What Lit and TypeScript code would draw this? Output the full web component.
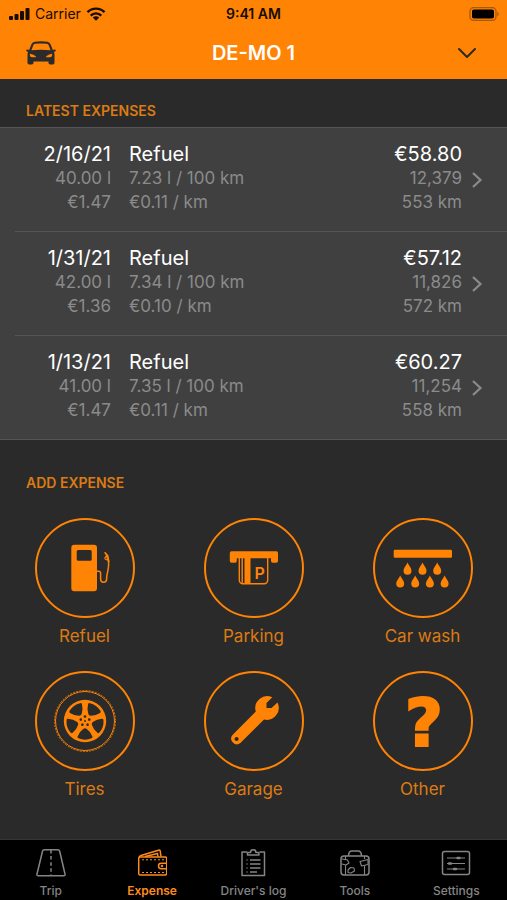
import { LitElement, html, css, svg } from "lit";
import { customElement, state } from "lit/decorators.js";

interface Expense {
  date: string;
  title: string;
  cost: string;
  volume: string;
  consumption: string;
  odometer: string;
  unitPrice: string;
  costPerKm: string;
  distance: string;
}

const EXPENSES: Expense[] = [
  { date: "2/16/21", title: "Refuel", cost: "€58.80", volume: "40.00 l", consumption: "7.23 l / 100 km", odometer: "12,379", unitPrice: "€1.47", costPerKm: "€0.11 / km", distance: "553 km" },
  { date: "1/31/21", title: "Refuel", cost: "€57.12", volume: "42.00 l", consumption: "7.34 l / 100 km", odometer: "11,826", unitPrice: "€1.36", costPerKm: "€0.10 / km", distance: "572 km" },
  { date: "1/13/21", title: "Refuel", cost: "€60.27", volume: "41.00 l", consumption: "7.35 l / 100 km", odometer: "11,254", unitPrice: "€1.47", costPerKm: "€0.11 / km", distance: "558 km" },
];

/* A water drop with its tip at (x, y). */
const drop = (x: number, y: number) =>
  svg`<path transform="translate(${x} ${y})" d="M0 0C1 3 4 5.200 4 8.200A4 4 0 0 1-4 8.200C-4 5.200-1 3 0 0Z"/>`;

const spokes = [0, 72, 144, 216, 288];

/* Category icons, drawn on a 100 x 100 grid inside the ring. */
const CATEGORIES = [
  {
    label: "Refuel",
    icon: svg`
      <path fill-rule="evenodd" d="M39.300 26.800h19.700a3 3 0 0 1 3 3v40.400a3 3 0 0 1-3 3H39.300a3 3 0 0 1-3-3V29.800a3 3 0 0 1 3-3ZM43.200 32a1.500 1.500 0 0 0-1.500 1.500v7.700a1.500 1.500 0 0 0 1.500 1.500h12a1.500 1.500 0 0 0 1.500-1.500v-7.700A1.500 1.500 0 0 0 55.200 32Z"/>
      <path class="line" stroke-width="1.500" d="M62 53.300h1.600q2 0 2 2V61q0 3.300 3 3.300t3-3.300c0-5 2-9 2-14V42.500"/>
      <path d="M69 34.500 70.500 34 73.500 37.500 74.600 44 72.800 44 72.300 42.500 69.700 41.500 69.200 39.700 71 37.500Z"/>
      <circle cx="71.200" cy="40.200" r="0.800" class="hole"/>`,
  },
  {
    label: "Parking",
    icon: svg`
      <path d="M27.500 33.300h44.800a1.700 1.700 0 0 1 1.700 1.700v8a1.700 1.700 0 0 1-1.700 1.700h-3.600a1.700 1.700 0 0 1-1.700-1.700V40.300H32.800V43a1.700 1.700 0 0 1-1.700 1.700h-3.600A1.700 1.700 0 0 1 25.800 43v-8a1.700 1.700 0 0 1 1.700-1.700Z"/>
      <path class="line" stroke-width="1.400" d="M35.300 40v22.300a3.500 3.500 0 0 0 3.500 3.500h21.400a3.500 3.500 0 0 0 3.500-3.500V40M38.200 40v25"/>
      <path d="M40.500 40h6v26h-6Z"/>
      <text class="p" x="50.500" y="60.500">P</text>`,
  },
  {
    label: "Car wash",
    icon: svg`
      <rect x="20.700" y="31.700" width="58.300" height="8" rx="1.200"/>
      ${drop(34.5, 44.6)}${drop(49.5, 44.6)}${drop(64.2, 44.6)}
      ${drop(27.2, 57.4)}${drop(42.2, 57.4)}${drop(56.9, 57.4)}${drop(71.6, 57.4)}`,
  },
  {
    label: "Tires",
    icon: svg`
      <circle class="line" stroke-width="1" cx="50" cy="50" r="29.500"/>
      <circle class="line" stroke-width="0.800" stroke-dasharray="2 1.200" cx="50" cy="50" r="30.500"/>
      <circle cx="50" cy="50" r="21.200"/>
      ${spokes.map(
        (a) => svg`
          <path class="hole" transform="rotate(${a + 36} 50 50)" d="M42.600 34.600Q42 33.400 43.500 32.700 50 30 56.500 32.700 58 33.400 57.400 34.600 55.500 39.500 51.500 42.300 50 43.200 48.500 42.300 44.500 39.500 42.600 34.600Z"/>
          <circle class="hole" transform="rotate(${a} 50 50)" cx="50" cy="45.500" r="1.300"/>`
      )}
      <circle class="hole" cx="50" cy="50" r="0.900"/>`,
  },
  {
    label: "Garage",
    icon: svg`
      <path fill-rule="evenodd" d="M68.300 26.200 62.500 32v5h5L73.500 31.500A12 12 0 0 1 60 48.500L36.400 72A5.700 5.700 0 0 1 28.500 63.900L51.800 40.500A12 12 0 0 1 68.300 26.200ZM32.600 65.900a2 2 0 1 0 .01 0Z"/>`,
  },
  { label: "Other", icon: svg`<text class="q" x="51" y="75" text-anchor="middle">?</text>` },
];

/* Tab icons, stroked on a 30 x 30 grid. */
const TABS = [
  {
    label: "Trip",
    icon: svg`
      <path d="M8.500 1.700h13.200q1.600 0 2 1.600L29 26q.4 1.800-1.400 1.800H2.400Q.6 27.800 1 26L6.500 3.300q.4-1.600 2-1.600Z"/>
      <path d="M15 2v25.500" stroke-dasharray="3.500 2.600"/>`,
  },
  {
    label: "Expense",
    icon: svg`
      <rect x="1.700" y="9" width="28" height="18" rx="1.500"/>
      <path d="M2 9.500Q2.500 8 4 7.500L21.500 2.200q1.500-.4 1.700 1L24 8.500M8 8.500 20.500 5.500 21 8.500"/>
      <path d="M29.500 15.300h-5.300a2.700 2.700 0 0 0 0 5.400h5.300"/>
      <path stroke-width="1" stroke-dasharray="2 2" d="M5 11.800h22M5 24.500h22"/>
      <circle cx="25" cy="18" r="0.500"/>`,
  },
  {
    label: "Driver's log",
    icon: svg`
      <path d="M9 4H4v23.500h22.500V4h-5"/>
      <path d="M9.500 7V4.500h3a2.700 2.700 0 0 1 5.400 0h3V7Z"/>
      <path d="M8.500 12h1M12 12h10.500M8.500 16h1M12 16h10.500M8.500 20h1M12 20h10.500M8.500 24h1M12 24h7"/>`,
  },
  {
    label: "Tools",
    icon: svg`
      <rect x="1" y="8" width="28" height="19" rx="3"/>
      <path d="M8.500 8c0-3 1-5 3.500-5h6c2.500 0 3.500 2 3.500 5"/>
      <path stroke-width="1.100" d="M5.500 8v4M5.500 17v10M24.500 8v3M24.500 18v9M2 11l5.500 1 1.500 3-3 2-4-1M20 13.500l8-2v5l-6.500 1.500ZM8 22l2.500-2.500 3.500.5.500 3L11 25l-3-.5Z"/>`,
  },
  {
    label: "Settings",
    icon: svg`
      <rect x="1.500" y="3.500" width="27" height="23" rx="2"/>
      <path d="M6 10h18M6 15.500h18M6 21h18" stroke-width="1.200"/>
      <path d="M16.500 10h2M8 15.500h2M13 21h2" stroke-width="2.400" stroke-linecap="round"/>`,
  },
];

@customElement("app-root")
export class AppRoot extends LitElement {
  static styles = css`
    :host {
      display: flex;
      flex-direction: column;
      min-height: 100vh;
      background: #2a2a2a;
      color: #fff;
      font-family: Inter, "Liberation Sans", sans-serif;
    }
    * { box-sizing: border-box; }
    button, a { font: inherit; color: inherit; text-decoration: none; }
    button { background: none; border: 0; padding: 0; cursor: pointer; }
    svg { display: block; }
    ul { list-style: none; margin: 0; padding: 0; }
    .top { background: #ff8304; color: #1c1408; }
    .status {
      display: grid;
      grid-template-columns: 1fr auto 1fr;
      align-items: center;
      height: 27px;
      padding: 0 8px;
      font-size: 14px;
      color: #150c02;
    }
    .carrier { display: flex; align-items: center; gap: 5px; }
    .time { font-weight: 600; }
    .battery { justify-self: end; }
    .bar {
      display: grid;
      grid-template-columns: 1fr auto 1fr;
      align-items: center;
      height: 52px;
      padding: 0 26px;
    }
    .bar h1 { margin: 0; font-size: 20px; line-height: 24px; font-weight: 600; color: #fff; }
    .bar button { color: #2b2b2b; justify-self: start; }
    .bar .end { justify-self: end; padding: 4px; }
    h2 {
      margin: 0;
      padding: 24px 26px 8px;
      font-size: 14px;
      line-height: 16px;
      font-weight: 600;
      color: #dc7b14;
    }
    .list { background: #404040; border: solid #555; border-width: 1px 0; padding-left: 15px; }
    .item + .item { border-top: 1px solid #555; }
    .row {
      display: grid;
      grid-template-columns: 96px 1fr auto 12px;
      column-gap: 18px;
      align-items: center;
      width: 100%;
      padding: 14px 15px 17px 0;
      text-align: left;
    }
    .col { display: grid; font-size: 17px; line-height: 24px; color: #8b8b8b; white-space: nowrap; }
    .right { text-align: right; }
    .main { font-size: 20px; color: #fff; }
    .go { color: #8b8b8b; margin-left: -9px; margin-top: 4px; }
    main { flex: 1; }
    .add { padding: 35px 26px 8px; }
    .grid {
      display: grid;
      grid-template-columns: repeat(3, 1fr);
      row-gap: 23px;
      padding: 19px 0 24px;
    }
    .category {
      display: grid;
      justify-items: center;
      gap: 6px;
      width: 100%;
      font-size: 17px;
      line-height: 24px;
      color: #dc7b14;
    }
    .ring { width: 100px; height: 100px; border: 2px solid #ff8304; border-radius: 50%; }
    .ring svg { fill: #ff8304; margin: -2px; }
    .line { fill: none; stroke: #ff8304; }
    .hole { fill: #2a2a2a; }
    .p { font-size: 16px; font-weight: 600; }
    .q { font: 700 66px "DejaVu Sans", sans-serif; stroke: #ff8304; stroke-width: 2px; }
    .tabs {
      display: grid;
      grid-template-columns: repeat(5, 1fr);
      height: 61px;
      padding-top: 8px;
      background: #000;
      border-top: 1px solid #353535;
      position: sticky;
      bottom: 0;
    }
    .tab {
      display: grid;
      justify-items: center;
      align-content: start;
      gap: 5px;
      font-size: 12px;
      line-height: 16px;
      font-weight: 500;
      color: #858585;
    }
    .tab svg { fill: none; stroke: currentColor; stroke-width: 1.500px; stroke-linejoin: round; }
    .tab.on { color: #ff8c1a; font-weight: 600; }
  `;

  @state() private tab = "Expense";

  render() {
    return html`
      <header class="top">
        <div class="status">
          <div class="carrier">
            <svg width="22" height="14" viewBox="0 0 22 14" fill="currentColor" aria-hidden="true">
              <rect x="1" y="9" width="4" height="4" rx="1"/><rect x="6.500" y="7" width="4" height="6" rx="1"/>
              <rect x="12" y="4" width="4" height="9" rx="1"/><rect x="17.500" y="1" width="4" height="12" rx="1"/>
            </svg>
            <span>Carrier</span>
            <svg width="20" height="14" viewBox="0 0 20 14" aria-hidden="true" fill="none" stroke="currentColor" stroke-width="2.400">
              <path d="M1.500 5.200a12 12 0 0 1 17 0M4.700 8.600a7.500 7.500 0 0 1 10.600 0"/>
              <path d="M10 13.700 6.800 10.600a4.600 4.600 0 0 1 6.400 0Z" fill="currentColor" stroke="none"/>
            </svg>
          </div>
          <span class="time">9:41 AM</span>
          <svg class="battery" width="30" height="14" viewBox="0 0 30 14" aria-hidden="true">
            <rect x="1" y="0.700" width="26" height="12.600" rx="3.500" fill="none" stroke="#a5590b" stroke-width="1.300"/>
            <rect x="3" y="2.500" width="22" height="9" rx="1.800"/>
            <path d="M28.300 5v4q1.500-.6 1.500-2t-1.500-2Z" fill="#a5590b"/>
          </svg>
        </div>
        <div class="bar">
          <button aria-label="Vehicles">
            <svg width="30" height="24" viewBox="0 0 30 24" fill="currentColor" fill-rule="evenodd">
              <path d="M8.500.8Q15-.2 21.500.8q2.300.4 3.200 2.700l2.100 5.400 1.700-.4q1.300-.1 1.300.9t-1.300 1.300l-.7.100q.7 1.200.7 2.700v8.300q0 1.700-1.700 1.700h-2.600q-1.700 0-1.700-1.700v-1.300h-15v1.300q0 1.700-1.700 1.700H3.200q-1.700 0-1.700-1.700v-8.300q0-1.500.7-2.700l-.7-.1Q.2 10.400.2 9.400t1.300-.9l1.700.4 2.100-5.400Q6.200 1.200 8.500.8ZM9 2.800q-1.300.2-1.700 1.400L5.400 9.300q9.600-1.200 19.200 0l-1.900-5.100Q22.300 3 21 2.800q-6-.8-12 0ZM3.800 13.300q0 3 2.200 3h3.500q.9 0 .2-1-1.900-2-5.200-2.500-.7 0-.7.500Zm22.400 0q0-.5-.7-.5-3.300.5-5.200 2.500-.7 1 .2 1H24q2.200 0 2.200-3Z"/>
            </svg>
          </button>
          <h1>DE-MO 1</h1>
          <button class="end" aria-label="Choose vehicle">
            <svg width="20" height="12" viewBox="0 0 20 12" fill="none" stroke="currentColor" stroke-width="2" stroke-linecap="round" stroke-linejoin="round"><path d="M2 2l8 8 8-8"/></svg>
          </button>
        </div>
      </header>

      <main>
        <h2>LATEST EXPENSES</h2>
        <ul class="list">
          ${EXPENSES.map(
            (e) => html`
              <li class="item">
                <button class="row">
                  <span class="col right"><span class="main">${e.date}</span><span>${e.volume}</span><span>${e.unitPrice}</span></span>
                  <span class="col"><span class="main">${e.title}</span><span>${e.consumption}</span><span>${e.costPerKm}</span></span>
                  <span class="col right"><span class="main">${e.cost}</span><span>${e.odometer}</span><span>${e.distance}</span></span>
                  <svg class="go" width="12" height="18" viewBox="0 0 12 18" fill="none" stroke="currentColor" stroke-width="2.200" aria-hidden="true"><path d="M2 2l7.500 7L2 16"/></svg>
                </button>
              </li>`
          )}
        </ul>

        <h2 class="add">ADD EXPENSE</h2>
        <ul class="grid">
          ${CATEGORIES.map(
            (c) => html`
              <li>
                <button class="category">
                  <span class="ring"><svg width="100" height="100" viewBox="0 0 100 100" aria-hidden="true">${c.icon}</svg></span>
                  <span>${c.label}</span>
                </button>
              </li>`
          )}
        </ul>
      </main>

      <nav class="tabs">
        ${TABS.map(
          (t) => html`
            <a href="#" class="tab ${t.label === this.tab ? "on" : ""}" @click=${() => (this.tab = t.label)}>
              <svg width="30" height="30" viewBox="0 0 30 30" aria-hidden="true">${t.icon}</svg>
              <span>${t.label}</span>
            </a>`
        )}
      </nav>
    `;
  }
}
